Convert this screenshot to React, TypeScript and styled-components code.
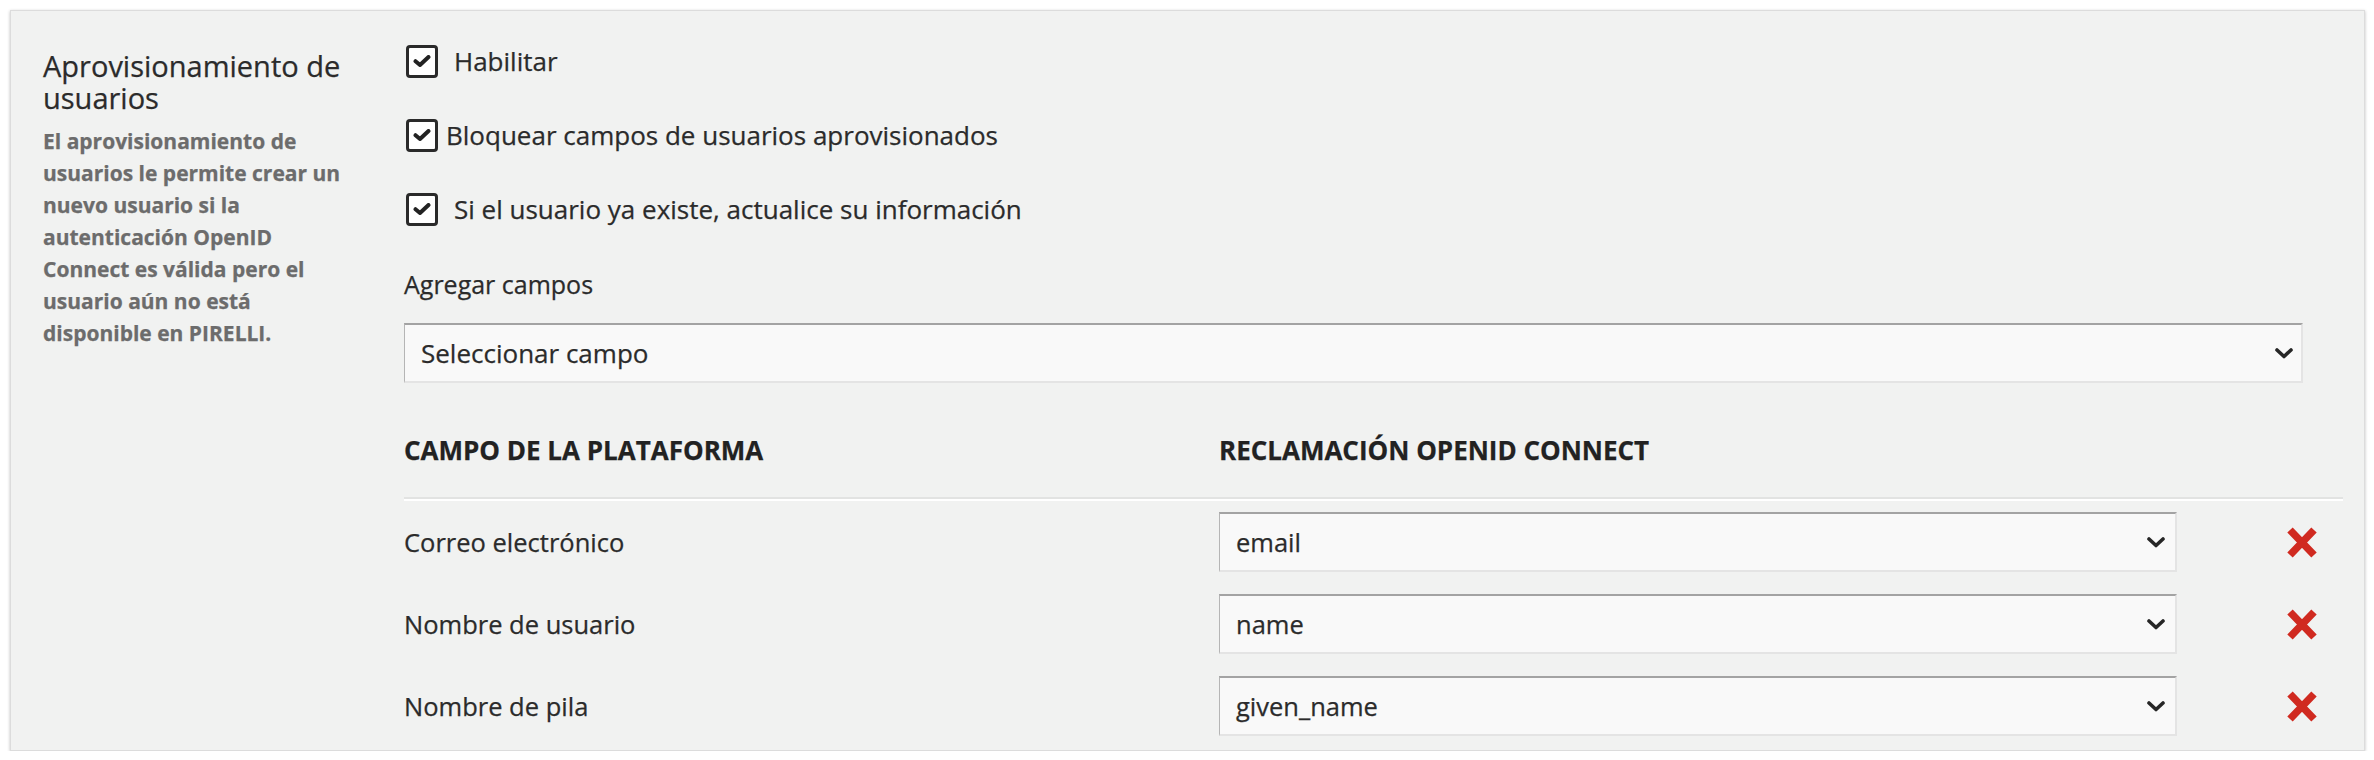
import styled, { createGlobalStyle } from 'styled-components';

const GlobalStyle = createGlobalStyle`
	body {
		margin: 0;
		background: #fff;
		font-family: 'Open Sans', 'Liberation Sans', sans-serif;
		color: #2b2b2b;
		-webkit-text-stroke: 0.25px currentColor;
	}
`;

const Panel = styled.section`
	width: 2355px;
	margin: 10px 0 0 10px;
	box-sizing: border-box;
	background: #f1f2f1;
	border: 1px solid #dcdcdc;
	box-shadow: 0 1px 3px rgba(0, 0, 0, 0.25);
	padding: 33px 20px 3px 32px;
	display: grid;
	grid-template-columns: 302px 1fr;
	column-gap: 59px;
`;

const Intro = styled.div`
	padding-top: 6px;
`;

const Title = styled.h2`
	margin: 0;
	font-size: 29px;
	line-height: 32px;
	font-weight: 400;
	color: #2b2b2b;
`;

const Description = styled.p`
	margin: 11px 0 0;
	font-size: 21px;
	line-height: 32px;
	font-weight: 700;
	color: #6c6c6c;
`;

const Body = styled.div`
	display: flex;
	flex-direction: column;
`;

const CheckRow = styled.label`
	display: flex;
	align-items: center;
	height: 34px;
	margin-bottom: 40px;
	font-size: 26px;
	color: #2b2b2b;
`;

const Box = styled.span`
	width: 32px;
	height: 33px;
	margin-left: 2px;
	box-sizing: border-box;
	border: 3px solid #2a2a2a;
	border-radius: 4px;
	background: #fff;
	display: flex;
	align-items: center;
	justify-content: center;
	flex-shrink: 0;
`;

const CheckText = styled.span<{ $tight?: boolean }>`
	margin-left: ${(p) => (p.$tight ? '8px' : '16px')};
`;

const FieldLabel = styled.div`
	margin-top: 1px;
	font-size: 25px;
	line-height: 34px;
`;

const Select = styled.div<{ $wide?: boolean }>`
	box-sizing: border-box;
	height: 60px;
	width: ${(p) => (p.$wide ? 'calc(100% - 41px)' : '958px')};
	margin-top: ${(p) => (p.$wide ? '22px' : '0')};
	background: #f9f9f9;
	border-top: 2px solid #a3a3a3;
	border-left: 1px solid #b5b5b5;
	border-right: 2px solid #e4e4e4;
	border-bottom: 2px solid #e4e4e4;
	display: flex;
	align-items: center;
	justify-content: space-between;
	padding: 0 ${(p) => (p.$wide ? '8px' : '10px')} 0 16px;
	font-size: ${(p) => (p.$wide ? '26px' : '25.5px')};
	color: #2b2b2b;
`;

const Table = styled.div`
	margin-top: 50px;
	margin-right: 1px;
`;

const Row = styled.div<{ $head?: boolean }>`
	display: grid;
	grid-template-columns: 815px 958px 1fr;
	align-items: center;
	padding: ${(p) => (p.$head ? '0 0 30px' : '11px 0')};
	font-size: ${(p) => (p.$head ? '26px' : '25.5px')};
	font-weight: ${(p) => (p.$head ? 700 : 400)};
	line-height: 34px;
	color: ${(p) => (p.$head ? '#222' : '#2b2b2b')};
	border-bottom: ${(p) => (p.$head ? '2px solid #e2e3e2' : 'none')};
`;

const Rows = styled.div`
	border-top: 2px solid #fff;
`;

const Remove = styled.button`
	justify-self: end;
	margin-right: 24px;
	padding: 0;
	border: 0;
	background: none;
	display: flex;
	cursor: pointer;
`;

const Check = () => (
	<svg width="18" height="12" viewBox="0 0 18 12">
		<path d="M2.5 6.2 L7 10 L15.5 2" fill="none" stroke="#222" strokeWidth="4" strokeLinecap="round" strokeLinejoin="round" />
	</svg>
);

const Chevron = () => (
	<svg width="18" height="11" viewBox="0 0 18 11">
		<path d="M2 2 L9 8.5 L16 2" fill="none" stroke="#262626" strokeWidth="3.6" strokeLinecap="round" strokeLinejoin="round" />
	</svg>
);

const Cross = () => (
	<svg width="34" height="31" viewBox="0 0 34 31">
		<path d="M5 3 L29 28 M29 3 L5 28" fill="none" stroke="#d02a20" strokeWidth="7.5" strokeLinecap="butt" />
	</svg>
);

const options = [
	{ label: 'Habilitar' },
	{ label: 'Bloquear campos de usuarios aprovisionados', tight: true },
	{ label: 'Si el usuario ya existe, actualice su información' },
];

const mappings = [
	{ field: 'Correo electrónico', claim: 'email' },
	{ field: 'Nombre de usuario', claim: 'name' },
	{ field: 'Nombre de pila', claim: 'given_name' },
];

const App = () => {
	return (
		<>
			<GlobalStyle />
			<Panel>
				<Intro>
					<Title>Aprovisionamiento de usuarios</Title>
					<Description>
						El aprovisionamiento de usuarios le permite crear un nuevo usuario si la autenticación
						OpenID Connect es válida pero el usuario aún no está disponible en PIRELLI.
					</Description>
				</Intro>
				<Body>
					{options.map((opt) => (
						<CheckRow key={opt.label}>
							<Box>
								<Check />
							</Box>
							<CheckText $tight={opt.tight}>{opt.label}</CheckText>
						</CheckRow>
					))}
					<FieldLabel>Agregar campos</FieldLabel>
					<Select $wide>
						<span>Seleccionar campo</span>
						<Chevron />
					</Select>
					<Table>
						<Row $head>
							<span>CAMPO DE LA PLATAFORMA</span>
							<span>RECLAMACIÓN OPENID CONNECT</span>
						</Row>
						<Rows>
							{mappings.map((m) => (
								<Row key={m.claim}>
									<span>{m.field}</span>
									<Select>
										<span>{m.claim}</span>
										<Chevron />
									</Select>
									<Remove>
										<Cross />
									</Remove>
								</Row>
							))}
						</Rows>
					</Table>
				</Body>
			</Panel>
		</>
	);
};

export default App;
